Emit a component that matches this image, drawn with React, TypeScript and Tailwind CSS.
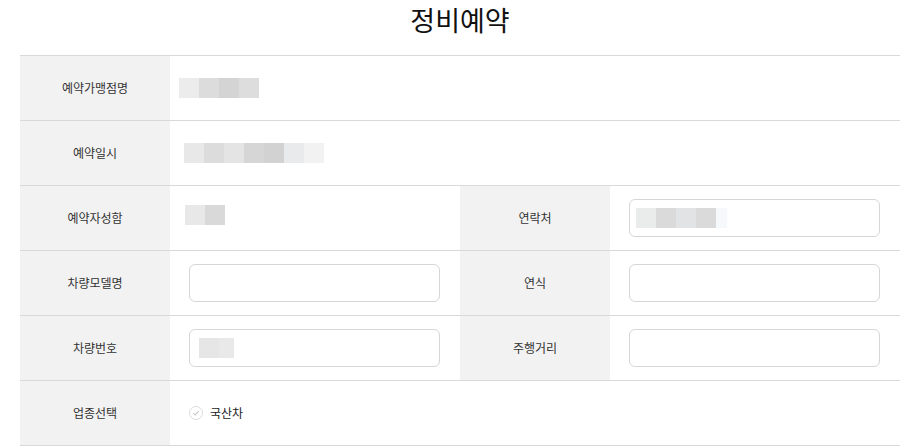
const font = { fontFamily: '"Noto Sans CJK KR", "Noto Sans", sans-serif' };

function Blur({ colors, last }: { colors: string[]; last?: string }) {
  return (
    <div className="flex">
      {colors.map((c, i) => (
        <div key={i} className="h-5 w-5" style={{ background: c }} />
      ))}
      {last && <div className="h-5 w-[11px]" style={{ background: last }} />}
    </div>
  );
}

function Label({ children }: { children: React.ReactNode }) {
  return (
    <div className="flex w-[150px] shrink-0 items-center justify-center bg-[#f2f2f2] text-[12px] text-[#333]">
      {children}
    </div>
  );
}

function Input({ children }: { children?: React.ReactNode }) {
  return (
    <div className="flex h-[38px] w-[251px] items-center rounded-[6px] border border-[#d6d6d6] bg-white px-[6px]">
      {children}
    </div>
  );
}

export default function App() {
  return (
    <div className="h-[447px] w-[920px] overflow-hidden bg-white" style={font}>
      <h1 className="h-[55px] text-center text-[27px] leading-[39px] text-[#111]">정비예약</h1>
      <div className="mx-5 border-t border-[#d9d9d9]">
        <div className="flex h-[65px] border-b border-[#d9d9d9]">
          <Label>예약가맹점명</Label>
          <div className="flex items-center pl-[9px]">
            <Blur colors={['#ececec', '#dcdcdc', '#d4d4d4', '#dddddd']} />
          </div>
        </div>
        <div className="flex h-[65px] border-b border-[#d9d9d9]">
          <Label>예약일시</Label>
          <div className="flex items-center pl-[14px]">
            <Blur colors={['#e8e8e8', '#dcdcdc', '#e4e4e4', '#d6d6d6', '#d2d2d2', '#e8eaeb', '#f2f2f2']} />
          </div>
        </div>
        <div className="flex h-[65px] border-b border-[#d9d9d9]">
          <Label>예약자성함</Label>
          <div className="flex w-[290px] items-start pl-[15px] pt-[19px]">
            <Blur colors={['#e8e8e8', '#d8d9d8']} />
          </div>
          <Label>연락처</Label>
          <div className="flex w-[290px] items-center pl-[19px]">
            <Input>
              <Blur colors={['#eaebeb', '#dadada', '#e2e3e4', '#dadada']} last="#f6f9fb" />
            </Input>
          </div>
        </div>
        <div className="flex h-[65px] border-b border-[#d9d9d9]">
          <Label>차량모델명</Label>
          <div className="flex w-[290px] items-center pl-[19px]">
            <Input />
          </div>
          <Label>연식</Label>
          <div className="flex w-[290px] items-center pl-[19px]">
            <Input />
          </div>
        </div>
        <div className="flex h-[65px] border-b border-[#d9d9d9]">
          <Label>차량번호</Label>
          <div className="flex w-[290px] items-center pl-[19px]">
            <Input>
              <div className="ml-[3px] flex">
                <div className="h-5 w-5 bg-[#e6e6e6]" />
                <div className="h-5 w-[15px] bg-[#e9e9e9]" />
              </div>
            </Input>
          </div>
          <Label>주행거리</Label>
          <div className="flex w-[290px] items-center pl-[19px]">
            <Input />
          </div>
        </div>
        <div className="flex h-[65px] border-b border-[#d9d9d9]">
          <Label>업종선택</Label>
          <div className="flex items-center gap-[7px] pl-[19px]">
            <svg width="14" height="14" viewBox="0 0 14 14">
              <circle cx="7" cy="7" r="6.5" fill="#fff" stroke="#dcdcdc" />
              <path d="M4.3 7.2 L6.2 9 L9.8 5.2" fill="none" stroke="#c8c8c8" strokeWidth="1.1" />
            </svg>
            <span className="text-[12px] text-[#222]">국산차</span>
          </div>
        </div>
      </div>
    </div>
  );
}
